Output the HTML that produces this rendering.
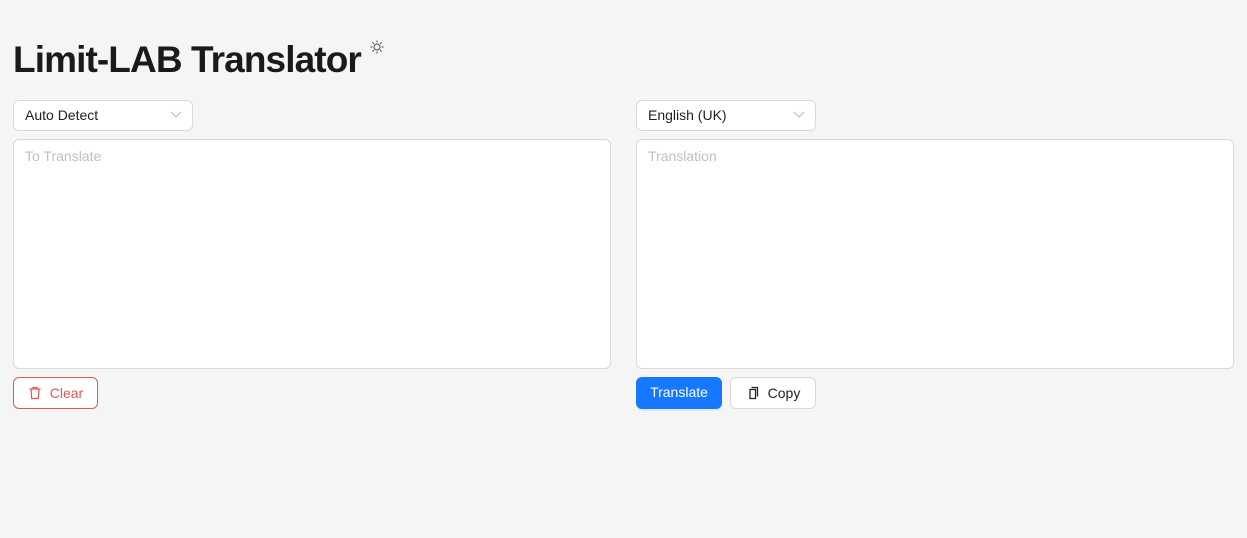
<!DOCTYPE html>
<html><head><meta charset="utf-8"><style>
*{box-sizing:border-box;margin:0;padding:0}
body{width:1247px;height:538px;background:#f5f5f5;font-family:"Liberation Sans",sans-serif;position:relative;overflow:hidden;color:#1f1f1f}
h1{position:absolute;left:13px;top:38px;font-size:37px;font-weight:bold;letter-spacing:-0.9px;color:#1a1a1a;line-height:44px}
.sun{position:absolute;left:370px;top:40px}
.sel{position:absolute;top:100px;width:180px;height:31px;background:#fff;border:1px solid #d9d9d9;border-radius:6px;font-size:14px;padding:0 11px;line-height:29px}
.sel svg{position:absolute;right:10px;top:10px}
.ta{position:absolute;top:139px;width:598px;height:230px;background:#fff;border:1px solid #d9d9d9;border-radius:6px;font-size:14px;color:#bfbfbf;padding:8px 11px;line-height:16px}
.btn{position:absolute;top:377px;height:32px;border-radius:6px;font-size:14px;line-height:30px;text-align:center}
</style></head><body>
<h1>Limit-LAB Translator</h1>
<svg class="sun" width="14" height="14" viewBox="0 0 14 14" fill="none" stroke="#444" stroke-width="1"><circle cx="7" cy="7" r="3"/><path d="M7 0.5v2M7 11.5v2M0.5 7h2M11.5 7h2M2.4 2.4l1.4 1.4M10.2 10.2l1.4 1.4M2.4 11.6l1.4-1.4M10.2 3.8l1.4-1.4"/></svg>
<div class="sel" style="left:13px">Auto Detect<svg width="12" height="8" viewBox="0 0 12 8"><path d="M1 1l5 5 5-5" fill="none" stroke="#bfbfbf" stroke-width="1.2"/></svg></div>
<div class="sel" style="left:636px">English (UK)<svg width="12" height="8" viewBox="0 0 12 8"><path d="M1 1l5 5 5-5" fill="none" stroke="#bfbfbf" stroke-width="1.2"/></svg></div>
<div class="ta" style="left:13px">To Translate</div>
<div class="ta" style="left:636px">Translation</div>
<div class="btn" style="left:13px;width:85px;border:1px solid #e05555;color:#e05555;background:#fff"><svg width="14" height="14" viewBox="0 0 14 14" style="vertical-align:-2px;margin-right:8px" fill="none" stroke="#e05555" stroke-width="1.2"><path d="M1.5 3h11M5 3V1.5h4V3M3 3l.7 9.5h6.6L11 3"/></svg>Clear</div>
<div class="btn" style="left:636px;width:86px;background:#1677ff;color:#fff;box-shadow:0 2px 0 rgba(5,145,255,.1)">Translate</div>
<div class="btn" style="left:730px;width:86px;border:1px solid #d9d9d9;background:#fff;color:#1f1f1f"><svg width="14" height="14" viewBox="0 0 14 14" style="vertical-align:-2px;margin-right:8px" fill="none" stroke="#222" stroke-width="1.3"><path d="M4 3.5h5.5v9H4zM5.5 1.5H11.5v9"/></svg>Copy</div>
</body></html>
